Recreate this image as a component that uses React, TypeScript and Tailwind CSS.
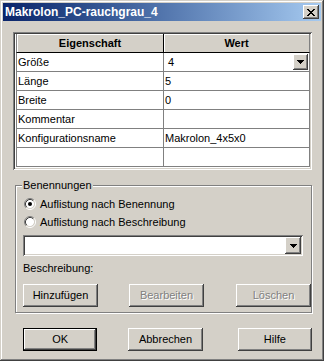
const raised =
  "shadow-[inset_-1px_-1px_#404040,inset_1px_1px_#fff,inset_-2px_-2px_#808080]";
const sunken =
  "shadow-[inset_1px_1px_#808080,inset_-1px_-1px_#fff,inset_2px_2px_#404040,inset_-2px_-2px_#D4D0C8]";

function Arrow() {
  return (
    <svg width="7" height="4" viewBox="0 0 7 4" shapeRendering="crispEdges">
      <rect x="0" y="0" width="7" height="1" fill="#000" />
      <rect x="1" y="1" width="5" height="1" fill="#000" />
      <rect x="2" y="2" width="3" height="1" fill="#000" />
      <rect x="3" y="3" width="1" height="1" fill="#000" />
    </svg>
  );
}

function DropButton({ h = "h-[16px]", w = "w-[15px]" }: { h?: string; w?: string }) {
  return (
    <div className={`${w} ${h} bg-[#D4D0C8] ${raised} flex items-center justify-center shrink-0`}>
      <Arrow />
    </div>
  );
}

function CloseGlyph() {
  const rows = [
    [0, 2, 6, 2],
    [1, 2, 5, 2],
    [2, 4],
    [3, 2],
    [2, 4],
    [1, 2, 5, 2],
    [0, 2, 6, 2],
  ];
  return (
    <svg width="8" height="7" viewBox="0 0 8 7" shapeRendering="crispEdges">
      {rows.map((r, y) =>
        r.length === 4 ? (
          <g key={y}>
            <rect x={r[0]} y={y} width={r[1]} height="1" fill="#000" />
            <rect x={r[2]} y={y} width={r[3]} height="1" fill="#000" />
          </g>
        ) : (
          <rect key={y} x={r[0]} y={y} width={r[1]} height="1" fill="#000" />
        )
      )}
    </svg>
  );
}

function Radio({ checked, label }: { checked?: boolean; label: string }) {
  return (
    <div className="flex items-center h-[18px]">
      <svg width="12" height="12" viewBox="0 0 12 12" className="shrink-0 ml-[1px]">
        <circle cx="6" cy="6" r="4.2" fill="#fff" />
        <path d="M2.11 9.89 A5.5 5.5 0 0 1 9.89 2.11" stroke="#808080" fill="none" />
        <path d="M9.89 2.11 A5.5 5.5 0 0 1 2.11 9.89" stroke="#fff" fill="none" />
        <path d="M2.82 9.18 A4.5 4.5 0 0 1 9.18 2.82" stroke="#404040" fill="none" />
        <path d="M9.18 2.82 A4.5 4.5 0 0 1 2.82 9.18" stroke="#D4D0C8" fill="none" />
        {checked && <circle cx="6" cy="6" r="2" fill="#000" />}
      </svg>
      <span className="ml-[4px]">{label}</span>
    </div>
  );
}

function Button({
  label,
  disabled,
  isDefault,
  className = "",
}: {
  label: string;
  disabled?: boolean;
  isDefault?: boolean;
  className?: string;
}) {
  if (isDefault) {
    return (
      <div className={`w-[75px] h-[23px] border border-black bg-[#D4D0C8] ${className}`}>
        <div className={`w-full h-full ${raised} flex items-center justify-center`}>{label}</div>
      </div>
    );
  }
  return (
    <div
      className={`w-[75px] h-[23px] bg-[#D4D0C8] ${raised} flex items-center justify-center ${
        disabled ? "text-[#808080] [text-shadow:1px_1px_0_#fff]" : ""
      } ${className}`}
    >
      {label}
    </div>
  );
}

const rows: [string, string][] = [
  ["Größe", "4"],
  ["Länge", "5"],
  ["Breite", "0"],
  ["Kommentar", ""],
  ["Konfigurationsname", "Makrolon_4x5x0"],
  ["", ""],
];

export default function App() {
  return (
    <div className="w-[324px] h-[361px] bg-[#D4D0C8] p-[3px] shadow-[inset_-1px_-1px_#404040,inset_1px_1px_#D4D0C8,inset_-2px_-2px_#808080,inset_2px_2px_#fff] font-['Liberation_Sans',Arial,sans-serif] text-[11px] text-black leading-none select-none">
      {/* Title bar */}
      <div className="h-[18px] flex items-center bg-gradient-to-r from-[#0A246A] to-[#A6CAF0] pl-[2px] pr-[2px]">
        <span className="text-white font-bold text-[12px]">Makrolon_PC-rauchgrau_4</span>
        <div className={`ml-auto w-[16px] h-[14px] bg-[#D4D0C8] ${raised} flex items-center justify-center`}>
          <CloseGlyph />
        </div>
      </div>

      <div className="pl-[10px] pr-[9px]">
        {/* Property table */}
        <div className={`mt-[11px] w-[299px] h-[138px] p-[2px] bg-white ${sunken}`}>
          <div className="pl-[1px]">
            <div className="grid grid-cols-[148px_146px] h-[19px]">
              <div className="bg-[#D4D0C8] border-l border-[#808080] border-r-black border-r border-b border-b-black shadow-[inset_1px_1px_#fff] flex items-center justify-center font-bold">
                Eigenschaft
              </div>
              <div className="bg-[#D4D0C8] border-b border-black border-r border-r-[#808080] shadow-[inset_1px_1px_#fff] flex items-center justify-center font-bold">
                Wert
              </div>
            </div>
            {rows.map(([k, v], i) => (
              <div key={i} className="grid grid-cols-[148px_146px] h-[19px]">
                <div className="border-l border-r border-b border-[#808080] flex items-center pl-[1px]">{k}</div>
                <div className="border-r border-b border-[#808080] flex items-center pl-[1px]">
                  {i === 0 ? (
                    <>
                      <span className="pl-[3px]">{v}</span>
                      <div className="ml-auto mr-[1px]">
                        <DropButton />
                      </div>
                    </>
                  ) : (
                    <span>{v}</span>
                  )}
                </div>
              </div>
            ))}
          </div>
        </div>

        {/* Group box */}
        <div className="relative ml-[2px] mt-[15px] w-[297px] h-[128px] border border-[#808080] shadow-[1px_1px_0_#fff,inset_1px_1px_0_#fff] pl-[7px]">
          <span className="absolute left-[6px] -top-[7px] bg-[#D4D0C8] px-[1px] leading-[13px]">Benennungen</span>
          <div className="pt-[9px]">
            <Radio checked label="Auflistung nach Benennung" />
            <Radio label="Auflistung nach Beschreibung" />
          </div>
          <div className={`mt-[4px] w-[280px] h-[21px] bg-white ${sunken} p-[2px] flex justify-end`}>
            <DropButton w="w-[16px]" h="h-[17px]" />
          </div>
          <div className="mt-[3px] h-[18px] flex items-center">Beschreibung:</div>
          <div className="mt-[7px] flex">
            <Button label="Hinzufügen" />
            <Button label="Bearbeiten" disabled className="ml-[31px]" />
            <Button label="Löschen" disabled className="ml-[32px]" />
          </div>
        </div>

        {/* Dialog buttons */}
        <div className="mt-[15px] ml-[10px] flex">
          <Button label="OK" isDefault />
          <Button label="Abbrechen" className="ml-[31px]" />
          <Button label="Hilfe" className="ml-[35px]" />
        </div>
      </div>
    </div>
  );
}
